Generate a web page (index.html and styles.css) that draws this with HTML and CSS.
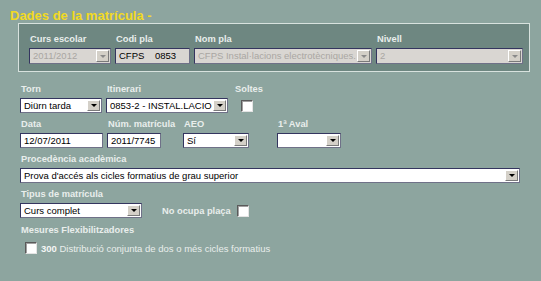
FILE: index.html
```html
<!DOCTYPE html>
<html lang="ca">
<head>
  <meta charset="UTF-8">
  <title>Dades de la matrícula</title>
  <link rel="stylesheet" href="styles.css">
</head>
<body>
  <h2 class="title">Dades de la matrícula -</h2>

  <div class="plan-box">
    <div class="field f-curs">
      <span class="lbl">Curs escolar</span>
      <div class="sel disabled"><span class="val">2011/2012</span><span class="btn"></span></div>
    </div>
    <div class="field f-codi">
      <span class="lbl">Codi pla</span>
      <div class="inp readonly"><span class="val pre">CFPS    0853</span></div>
    </div>
    <div class="field f-nom">
      <span class="lbl">Nom pla</span>
      <div class="sel disabled"><span class="val">CFPS Instal·lacions electrotècniques.</span><span class="btn"></span></div>
    </div>
    <div class="field f-nivell">
      <span class="lbl">Nivell</span>
      <div class="sel disabled"><span class="val">2</span><span class="btn"></span></div>
    </div>
  </div>

  <div class="form">
    <div class="row">
      <div class="field f-torn">
        <span class="lbl">Torn</span>
        <div class="sel"><span class="val">Diürn tarda</span><span class="btn"></span></div>
      </div>
      <div class="field f-itin">
        <span class="lbl">Itinerari</span>
        <div class="sel"><span class="val">0853-2 - INSTAL.LACIONS</span><span class="btn"></span></div>
      </div>
      <div class="field f-soltes">
        <span class="lbl">Soltes</span>
        <span class="chk"></span>
      </div>
    </div>

    <div class="row">
      <div class="field f-data">
        <span class="lbl">Data</span>
        <div class="inp"><span class="val">12/07/2011</span></div>
      </div>
      <div class="field f-num">
        <span class="lbl">Núm. matrícula</span>
        <div class="inp"><span class="val">2011/7745</span></div>
      </div>
      <div class="field f-aeo">
        <span class="lbl">AEO</span>
        <div class="sel"><span class="val">Sí</span><span class="btn"></span></div>
      </div>
      <div class="field f-aval">
        <span class="lbl">1ª Aval</span>
        <div class="sel"><span class="val"></span><span class="btn"></span></div>
      </div>
    </div>

    <div class="row">
      <div class="field f-proc">
        <span class="lbl">Procedència acadèmica</span>
        <div class="sel"><span class="val">Prova d'accés als cicles formatius de grau superior</span><span class="btn"></span></div>
      </div>
    </div>

    <div class="row bottom">
      <div class="field f-tipus">
        <span class="lbl">Tipus de matrícula</span>
        <div class="sel"><span class="val">Curs complet</span><span class="btn"></span></div>
      </div>
      <div class="noocupa">
        <span class="lbl">No ocupa plaça</span>
        <span class="chk"></span>
      </div>
    </div>

    <div class="mesures">
      <span class="lbl">Mesures Flexibilitzadores</span>
      <div class="mesura">
        <span class="chk"></span>
        <span class="mtext"><b>300</b> Distribució conjunta de dos o més cicles formatius</span>
      </div>
    </div>
  </div>
</body>
</html>
```

FILE: styles.css
```css
body {
  margin: 0;
  background: #8da59f;
  font-family: "Liberation Sans", Arial, sans-serif;
}
.title {
  margin: 0;
  padding: 8px 0 0 10px;
  font-size: 13px;
  line-height: 15px;
  font-weight: bold;
  color: #f2da22;
}
.plan-box {
  box-sizing: border-box;
  margin-left: 18px;
  width: 512px;
  height: 49px;
  padding: 10px 0 0 10px;
  border: 1px solid #d8e2de;
  background: #6e8781;
  display: flex;
  gap: 4px;
}
.plan-box .sel, .plan-box .inp {
  height: 16px;
}
.plan-box .val {
  padding-top: 1px;
}
.field {
  display: flex;
  flex-direction: column;
}
.lbl {
  display: block;
  font-size: 9.3px;
  line-height: 11px;
  font-weight: bold;
  color: #e9eeec;
  margin: 0 0 3px 1px;
  white-space: nowrap;
}
.sel, .inp {
  box-sizing: border-box;
  height: 15px;
  display: flex;
  background: #fff;
  border: 1px solid;
  border-color: #34355f #6f7188 #6f7188 #34355f;
  overflow: hidden;
}
.val {
  flex: 1;
  overflow: hidden;
  white-space: nowrap;
  font-size: 9.5px;
  line-height: 12px;
  padding: 1px 0 0 3px;
  color: #000;
}
.pre {
  white-space: pre;
}
.disabled, .readonly {
  background: #d9d6d2;
}
.disabled .val {
  color: #a9a6a2;
}
.btn {
  box-sizing: border-box;
  width: 13px;
  margin: 1px;
  background: #d4d0c8;
  border: 1px solid;
  border-color: #fff #7a7a7a #7a7a7a #fff;
  display: flex;
  align-items: center;
  justify-content: center;
}
.btn::after {
  content: "";
  border-left: 3px solid transparent;
  border-right: 3px solid transparent;
  border-top: 3px solid #000;
}
.disabled .btn::after {
  border-top-color: #8a8a8a;
}
.chk {
  display: block;
  box-sizing: border-box;
  width: 12px;
  height: 12px;
  background: #fff;
  border: 1px solid;
  border-color: #5a5a5a #e4e4e4 #e4e4e4 #5a5a5a;
  box-shadow: inset 1px 1px 0 #a0a0a0;
}

.f-curs { width: 82px; }
.f-codi { width: 75px; }
.f-nom { width: 178px; }
.f-nivell { width: 147px; }

.form {
  padding-left: 20px;
  margin-top: 12px;
  display: flex;
  flex-direction: column;
  gap: 6px;
}
.row {
  display: flex;
}
.row.bottom {
  align-items: flex-end;
}
.f-torn { width: 82px; }
.f-itin { width: 122px; margin-left: 4px; }
.f-soltes { margin-left: 6px; }
.f-soltes .chk { margin: 2px 0 0 7px; }
.f-data { width: 83px; }
.f-num { width: 54px; margin-left: 4px; }
.f-aeo { width: 66px; margin-left: 22px; }
.f-aval { width: 64px; margin-left: 28px; }
.f-proc { width: 500px; }
.f-tipus { width: 122px; }
.noocupa {
  display: flex;
  align-items: flex-end;
  margin-left: 20px;
}
.noocupa .lbl {
  margin: 0 0 1px 0;
}
.noocupa .chk {
  margin: 0 0 1px 6px;
}
.mesures {
  margin-top: 1px;
}
.mesura {
  display: flex;
  align-items: center;
  margin-top: 6px;
  padding-left: 5px;
}
.mtext {
  margin-left: 4px;
  font-size: 9.5px;
  color: #e9eeec;
}
.mtext b {
  color: #f4f6f5;
}
```
